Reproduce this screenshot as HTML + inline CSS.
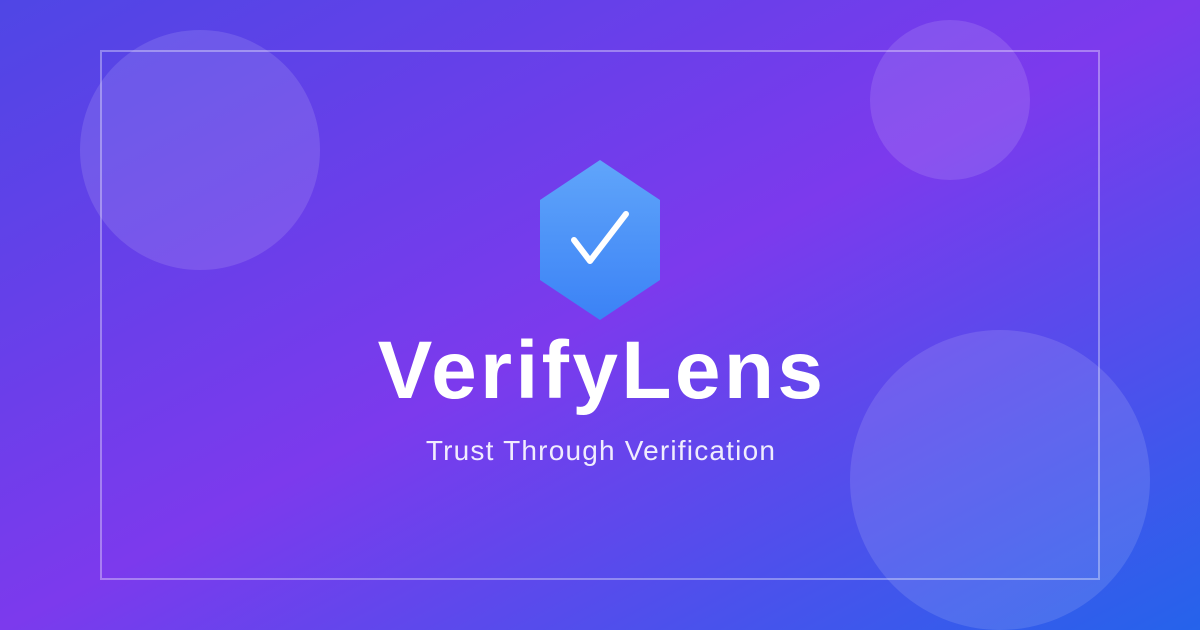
<!DOCTYPE html>
<html><head><meta charset="utf-8"><style>html,body{margin:0;padding:0;width:1200px;height:630px;overflow:hidden}</style></head>
<body>
<svg width="1200" height="630" viewBox="0 0 1200 630" xmlns="http://www.w3.org/2000/svg">
<defs>
<linearGradient id="bg" x1="0" y1="0" x2="1" y2="1">
<stop offset="0" stop-color="#4f46e5"/><stop offset="0.5" stop-color="#7c3aed"/><stop offset="1" stop-color="#2563eb"/>
</linearGradient>
<linearGradient id="hx" x1="0" y1="0" x2="0" y2="1">
<stop offset="0" stop-color="#60a5fa"/><stop offset="1" stop-color="#3b82f6"/>
</linearGradient>
</defs>
<rect width="1200" height="630" fill="url(#bg)"/>
<circle cx="200" cy="150" r="120" fill="#fff" fill-opacity="0.12"/>
<circle cx="950" cy="100" r="80" fill="#fff" fill-opacity="0.12"/>
<circle cx="1000" cy="480" r="150" fill="#fff" fill-opacity="0.12"/>
<rect x="101" y="51" width="998" height="528" fill="none" stroke="#fff" stroke-opacity="0.35" stroke-width="2"/>
<polygon points="600,160 660,200 660,280 600,320 540,280 540,200" fill="url(#hx)"/>
<polyline points="574,240 590,261 626,214" fill="none" stroke="#fff" stroke-width="6" stroke-linecap="round" stroke-linejoin="round"/>
<text x="602" y="398" text-anchor="middle" font-family="Liberation Sans, sans-serif" font-weight="bold" font-size="82" letter-spacing="3.4" fill="#fff">VerifyLens</text>
<text x="601" y="460" text-anchor="middle" font-family="Liberation Sans, sans-serif" font-size="28" letter-spacing="1.2" fill="#fff" fill-opacity="0.9">Trust Through Verification</text>
</svg>
</body></html>
